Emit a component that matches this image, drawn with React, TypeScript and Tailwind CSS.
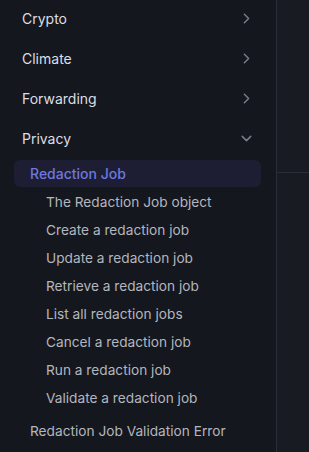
import { ChevronRight, ChevronDown } from "lucide-react";

const sections = ["Crypto", "Climate", "Forwarding"];

const jobLinks = [
  "The Redaction Job object",
  "Create a redaction job",
  "Update a redaction job",
  "Retrieve a redaction job",
  "List all redaction jobs",
  "Cancel a redaction job",
  "Run a redaction job",
  "Validate a redaction job",
];

export default function App() {
  return (
    <div
      className="flex h-[452px] w-[309px] overflow-hidden bg-[#15171e]"
      style={{ fontFamily: "Inter, 'Noto Sans', sans-serif" }}
    >
      {/* Sidebar */}
      <nav className="w-[277px] shrink-0 border-r border-[#2a2d35]">
        <ul>
          {sections.map((s) => (
            <li
              key={s}
              className="flex h-10 items-center justify-between pb-[4px] pl-[22px] pr-[21px] text-[14px] text-[#dcdee3]"
            >
              {s}
              <ChevronRight className="h-[17px] w-[17px] text-[#7b7f89]" strokeWidth={2} />
            </li>
          ))}
          <li className="flex h-10 items-center justify-between pb-[4px] pl-[22px] pr-[21px] text-[14px] text-[#dcdee3]">
            Privacy
            <ChevronDown className="h-[17px] w-[17px] text-[#7b7f89]" strokeWidth={2} />
          </li>
        </ul>
        <div className="pl-[14px] pr-[15px]">
          <div className="flex h-[27px] items-center rounded-md bg-[#1d1e34] pl-4 text-[14px] font-medium text-[#6e78de]">
            Redaction Job
          </div>
          <ul className="pt-[1px]">
            {jobLinks.map((l) => (
              <li key={l} className="flex h-7 items-center pl-8 text-[13.7px] text-[#b3b6be]">
                {l}
              </li>
            ))}
          </ul>
          <div className="flex h-[36px] items-center pl-4 pt-[2px] text-[13.7px] text-[#b3b6be]">
            Redaction Job Validation Error
          </div>
        </div>
      </nav>
      {/* Content area */}
      <div className="flex-1 bg-[#191b22]">
        <div className="h-[173px] border-b border-[#2a2d35]" />
      </div>
    </div>
  );
}
